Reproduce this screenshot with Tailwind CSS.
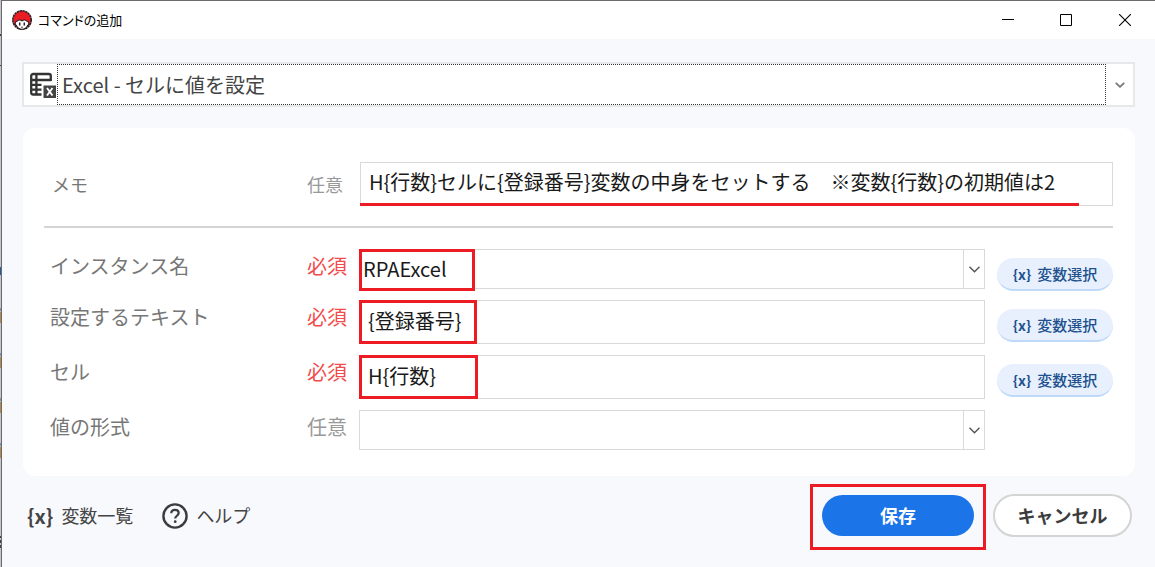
<!DOCTYPE html>
<html lang="ja">
  <head>
    <meta charset="UTF-8">
    <meta name="viewport" content="width=device-width, initial-scale=1">
    <title>コマンドの追加</title>
    <script src="https://cdn.jsdelivr.net/npm/@tailwindcss/browser@4"></script>
  </head>

  <body class="min-h-screen bg-[#c3c7cd] pl-px font-['Noto_Sans_CJK_JP','Noto_Sans',sans-serif]">
    <!-- sliver of the window behind the dialog -->
    <svg class="absolute top-0 left-0 h-[567px] w-px" viewBox="0 0 1 567">
      <path d="M0 34h1v2H0zM0 65h1v1H0zM0 536h1v2H0zM0 540h1v3H0zM0 545h1v3H0z" fill="#444"/>
      <path d="M0 267h1v8H0z" fill="#2d5a9a"/>
      <path d="M0 312h1v11H0zM0 357h1v11H0zM0 402h1v11H0zM0 447h1v11H0z" fill="#b58a45"/>
      <path d="M0 308h1v3H0zM0 353h1v3H0zM0 398h1v3H0zM0 443h1v3H0z" fill="#7d95a5"/>
    </svg>

    <div class="flex min-h-screen flex-col border-t border-l border-[#6a6a6e] bg-[#f8f9fd]">

      <!-- title bar -->
      <header class="flex h-[38px] items-center bg-white pl-[10px]">
        <svg class="h-5 w-5" viewBox="0 0 20 20">
          <circle cx="10" cy="10" r="9.2" fill="#ea1c24" stroke="#2b2023" stroke-width="1.6" stroke-dasharray="2.4 .5"/>
          <path d="M4.400 15.500C2.600 14.800 2.800 11.500 5 11.200 6.200 9.600 8.800 9.600 10 11c1.200-1.400 3.800-1.400 5 .2 2.200.3 2.400 3.600.6 4.300C14.600 18 12.600 19.200 10 19.200S5.400 18 4.400 15.500Z" fill="#fff" stroke="#2b2023" stroke-width="1.1"/>
          <path d="M7.700 12.500v3M12.300 12.500v3" stroke="#2b2023" stroke-width="1.500"/>
          <path d="M9 17.200h2" stroke="#2b2023" stroke-width=".8"/>
        </svg>
        <h1 class="ml-[6px] text-[13px] leading-5 text-black [font-feature-settings:'palt']">コマンドの追加</h1>
        <div class="ml-auto flex h-full">
          <button type="button" aria-label="最小化" class="flex w-[58px] items-center justify-center">
            <svg class="h-3 w-3" viewBox="0 0 12 12"><path d="M0 5.500h12" stroke="#000"/></svg>
          </button>
          <button type="button" aria-label="最大化" class="flex w-[58px] items-center justify-center">
            <svg class="h-3 w-3" viewBox="0 0 12 12"><path d="M.5.500h11v11H.5z" fill="none" stroke="#000"/></svg>
          </button>
          <button type="button" aria-label="閉じる" class="flex w-[60px] items-center justify-center">
            <svg class="h-3 w-3" viewBox="0 0 12 12"><path d="M0 0l12 12M12 0L0 12" stroke="#000" stroke-width="1.100"/></svg>
          </button>
        </div>
      </header>

      <form class="flex flex-col px-5 pt-[23px]">
        <!-- command picker -->
        <div class="flex h-[45px] items-stretch border-2 border-[#e8e8ea] bg-white">
          <svg class="mt-2 ml-[6px] h-7 w-[27px] shrink-0" viewBox="0 0 27 28">
            <path d="M20.800 9V4a2 2 0 0 0-2-2H3.200a2 2 0 0 0-2 2V20.500a2 2 0 0 0 2 2H11.500M1.200 8h19.600M1.200 12.800h10.300M1.200 17.600h10.300M6.400 2v20.500" fill="none" stroke="#333" stroke-width="2.300"/>
            <rect x="13.500" y="13.500" width="12.500" height="12.500" fill="#444"/>
            <path d="M17 16l5.500 7.500M22.500 16l-5.500 7.500" stroke="#fff" stroke-width="1.900"/>
          </svg>
          <select aria-label="コマンド" class="min-w-0 flex-1 appearance-none border border-dotted border-[#333] bg-white pl-1 text-[20px] text-[#444] outline-none">
            <option>Excel - セルに値を設定</option>
          </select>
          <div class="flex w-[27px] items-center justify-center">
            <svg class="h-[6px] w-[10px]" viewBox="0 0 10 6"><path d="M.8.800L5 4.800 9.200.800" fill="none" stroke="#777" stroke-width="1.800"/></svg>
          </div>
        </div>

        <!-- parameters -->
        <section class="mt-[21px] ml-px rounded-xl bg-white pt-[34px] pr-[22px] pb-[26px] pl-[21px]">
          <div class="flex h-11 items-center">
            <label for="memo" class="w-[263px] pl-2 text-[18px] text-[#777]">メモ</label>
            <span class="w-[53px] text-[18px] text-[#999]">任意</span>
            <div class="relative h-full flex-1">
              <input id="memo" type="text" value="H{行数}セルに{登録番号}変数の中身をセットする　※変数{行数}の初期値は2" class="h-full w-full border border-[#d9d9d9] bg-white pb-[6px] pl-2 text-[20px] text-[#1a1a1a] outline-none">
              <div class="absolute bottom-0 left-0 h-[3px] w-[719px] bg-[#ed1c24]"></div>
            </div>
          </div>

          <hr class="mt-5 mb-[21px] border-t-2 border-[#d5d5d5]">

          <div class="flex flex-col gap-[11px]">
            <div class="flex h-10 items-start">
              <label for="instance" class="w-[263px] pl-[6px] text-[20px] leading-[34px] text-[#777]">インスタンス名</label>
              <span class="w-[52px] text-[20px] leading-[34px] text-[#f24b4b]">必須</span>
              <div class="relative flex h-full flex-1 border border-[#d9d9d9]">
                <select id="instance" class="min-w-0 flex-1 appearance-none bg-white pl-[3px] text-[20px] text-[#1a1a1a] outline-none">
                  <option>RPAExcel</option>
                </select>
                <div class="pointer-events-none flex w-[21px] items-center justify-center border-l border-[#d9d9d9]">
                  <svg class="h-[7px] w-[11px]" viewBox="0 0 11 7"><path d="M.5.800l5 5 5-5" fill="none" stroke="#555" stroke-width="1.400"/></svg>
                </div>
                <div class="pointer-events-none absolute -top-px -left-px h-[42px] w-[116px] border-3 border-[#ed1c24]"></div>
              </div>
              <button type="button" class="mt-[9px] ml-3 flex h-[33px] w-[116px] items-center justify-center gap-[6px] rounded-full border-b-2 border-[#bfd9fb] bg-[#e8f0fd] pt-px text-[15px] text-[#21508f]"><span class="text-[14px] font-bold">{x}</span><span class="font-medium">変数選択</span></button>
            </div>

            <div class="flex h-11 items-start">
              <label for="text" class="w-[263px] pl-[6px] text-[20px] leading-[34px] text-[#777]">設定するテキスト</label>
              <span class="w-[52px] text-[20px] leading-[34px] text-[#f24b4b]">必須</span>
              <div class="relative h-full flex-1">
                <input id="text" type="text" value="{登録番号}" class="h-full w-full border border-[#d9d9d9] bg-white pb-1 pl-2 text-[20px] text-[#1a1a1a] outline-none">
                <div class="pointer-events-none absolute inset-y-0 left-0 w-[118px] border-3 border-[#ed1c24]"></div>
              </div>
              <button type="button" class="mt-[9px] ml-3 flex h-[33px] w-[116px] items-center justify-center gap-[6px] rounded-full border-b-2 border-[#bfd9fb] bg-[#e8f0fd] pt-px text-[15px] text-[#21508f]"><span class="text-[14px] font-bold">{x}</span><span class="font-medium">変数選択</span></button>
            </div>

            <div class="flex h-11 items-start">
              <label for="cell" class="w-[263px] pl-[6px] text-[20px] leading-[34px] text-[#777]">セル</label>
              <span class="w-[52px] text-[20px] leading-[34px] text-[#f24b4b]">必須</span>
              <div class="relative h-full flex-1">
                <input id="cell" type="text" value="H{行数}" class="h-full w-full border border-[#d9d9d9] bg-white pb-1 pl-2 text-[20px] text-[#1a1a1a] outline-none">
                <div class="pointer-events-none absolute inset-y-0 left-0 w-[119px] border-3 border-[#ed1c24]"></div>
              </div>
              <button type="button" class="mt-[9px] ml-3 flex h-[33px] w-[116px] items-center justify-center gap-[6px] rounded-full border-b-2 border-[#bfd9fb] bg-[#e8f0fd] pt-px text-[15px] text-[#21508f]"><span class="text-[14px] font-bold">{x}</span><span class="font-medium">変数選択</span></button>
            </div>

            <div class="flex h-10 items-start">
              <label for="format" class="w-[263px] pl-[6px] text-[20px] leading-[34px] text-[#777]">値の形式</label>
              <span class="w-[52px] text-[20px] leading-[34px] text-[#999]">任意</span>
              <div class="mr-32 flex h-full flex-1 border border-[#d9d9d9]">
                <select id="format" class="min-w-0 flex-1 appearance-none bg-white pl-[3px] text-[20px] text-[#1a1a1a] outline-none">
                  <option></option>
                </select>
                <div class="pointer-events-none flex w-[21px] items-center justify-center border-l border-[#d9d9d9]">
                  <svg class="h-[7px] w-[11px]" viewBox="0 0 11 7"><path d="M.5.800l5 5 5-5" fill="none" stroke="#555" stroke-width="1.400"/></svg>
                </div>
              </div>
            </div>
          </div>
        </section>

        <!-- footer -->
        <footer class="mt-[18px] flex items-center text-[#444]">
          <button type="button" class="ml-[5px] flex items-center gap-2 text-[18px]"><span class="text-[20px] font-bold">{x}</span>変数一覧</button>
          <button type="button" class="ml-[29px] flex items-center gap-2 text-[18px]">
            <svg class="h-[26px] w-[26px]" viewBox="0 0 26 26">
              <circle cx="13" cy="13" r="11.600" fill="none" stroke="#3c3c3c" stroke-width="2.400"/>
              <path d="M9.300 10.300C9.300 8 11 6.800 13 6.800s3.700 1.200 3.700 3.200c0 2.600-3.500 2.900-3.500 5.600" fill="none" stroke="#3c3c3c" stroke-width="2.200"/>
              <circle cx="13.200" cy="18.700" r="1.400" fill="#3c3c3c"/>
            </svg>
            ヘルプ
          </button>
          <div class="relative ml-auto">
            <button type="submit" class="block h-[41px] w-[152px] rounded-full bg-[#1c74e9] text-[18px] font-bold text-white">保存</button>
            <div class="pointer-events-none absolute -inset-x-3 -top-[11px] -bottom-[14px] border-3 border-[#ed1c24]"></div>
          </div>
          <button type="button" class="mr-[3px] ml-[19px] h-[43px] w-[139px] rounded-full border-2 border-[#d4d4d4] bg-white text-[18px] font-bold text-[#3c3c3c]">キャンセル</button>
        </footer>
      </form>
    </div>
  </body>
</html>
